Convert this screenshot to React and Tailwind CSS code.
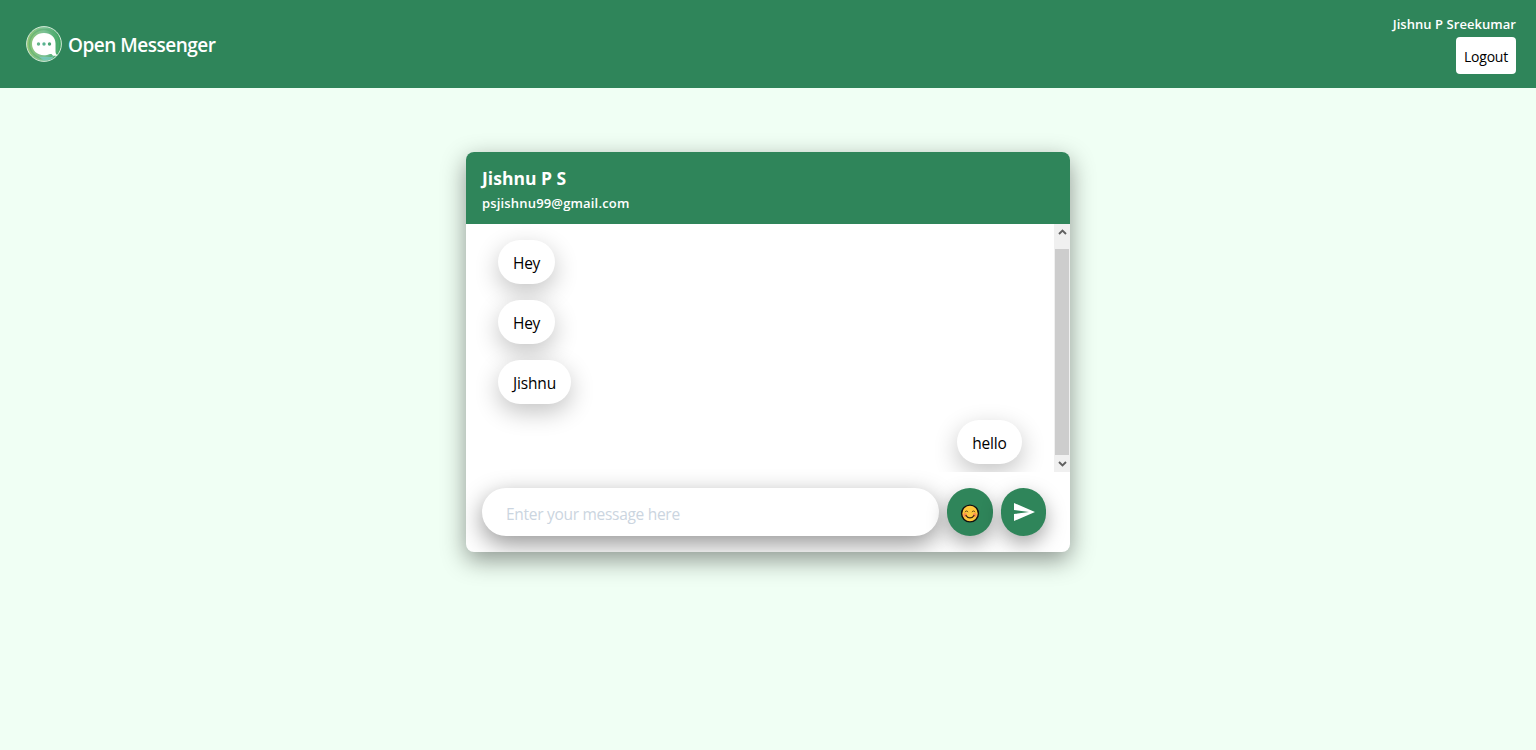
import React from "react";

const messages = [
  { id: 1, text: "Hey", mine: false, width: "w-[57px]", tracking: "tracking-[-0.3px]" },
  { id: 2, text: "Hey", mine: false, width: "w-[57px]", tracking: "tracking-[-0.3px]" },
  { id: 3, text: "Jishnu", mine: false, width: "w-[73px]", tracking: "tracking-[-0.15px]" },
  { id: 4, text: "hello", mine: true, width: "w-[65px]", tracking: "tracking-[-0.15px]" },
];

function Logo() {
  return (
    <svg className="h-9 w-9" viewBox="0 0 36 36">
      <defs>
        <linearGradient id="logoFill" x1="0" y1="0" x2="1" y2="0">
          <stop offset="0" stopColor="#8fc56f" />
          <stop offset="0.5" stopColor="#7cc196" />
          <stop offset="1" stopColor="#38a35e" />
        </linearGradient>
      </defs>
      <circle cx="18" cy="18" r="17.4" fill="url(#logoFill)" stroke="#d4ead9" strokeWidth="1" />
      <circle cx="18" cy="18" r="14.5" fill="none" stroke="#58ad73" strokeWidth="1.5" opacity="0.6" />
      <path d="M13 31h12l3-1-3 3.500-7 1z" fill="#79cbc2" opacity="0.8" />
      <path d="M18 7C25 7 29.500 11.500 29.500 17.500V25.500c0 1.500.5 2.500 1.500 3.500v.8h-4L25.500 28H24c-2 .9-4 1.200-6 1.200C11 29.200 6 24.200 6 18S11 7 18 7z" fill="#fff" />
      <circle cx="12.500" cy="18" r="1.700" fill="#66b58c" />
      <circle cx="18" cy="18" r="1.700" fill="#59b391" />
      <circle cx="23.500" cy="18" r="1.700" fill="#4da675" />
    </svg>
  );
}

function Smile() {
  return (
    <svg className="h-5 w-5" viewBox="-0.5 0 20 20" fill="none">
      <circle cx="9.500" cy="9.500" r="8.400" fill="#ffc83d" stroke="#111" strokeWidth="1.400" />
      <circle cx="4.700" cy="11" r="1.900" fill="#ff8d50" />
      <circle cx="14.300" cy="11" r="1.900" fill="#ff8d50" />
      <path d="M4.500 8.200c.5-1.600 2.500-1.600 3 0M11.500 8.200c.5-1.600 2.500-1.600 3 0" stroke="#5c4215" strokeWidth="1" />
      <path d="M5.500 11.500c1.700 3.200 6.300 3.200 8 0" stroke="#3b2b12" strokeWidth="1.300" strokeLinecap="round" />
    </svg>
  );
}

function Chevron({ up }) {
  return (
    <svg className="mr-px h-[6px] w-[9px]" viewBox="0 0 9 6" fill="none">
      <path d={up ? "M1 5l3.500-3.500L8 5" : "M1 1l3.500 3.500L8 1"} stroke="#606060" strokeWidth="1.900" />
    </svg>
  );
}

function Header() {
  return (
    <header className="flex h-[88px] items-center justify-between bg-[#2f855a] pr-5 pl-[26px] text-white">
      <div className="flex items-center gap-1.5">
        <Logo />
        <h1 className="pt-0.5 text-[19px] leading-6 font-semibold tracking-[-0.5px] whitespace-nowrap">Open Messenger</h1>
      </div>
      <div className="flex flex-col items-end gap-[3px]">
        <span className="text-[13px] leading-5 font-semibold tracking-[0.05px] whitespace-nowrap">Jishnu P Sreekumar</span>
        <button className="h-[37px] w-[60px] rounded bg-white pt-0.5 text-[14px] tracking-[-0.2px] text-black">Logout</button>
      </div>
    </header>
  );
}

function Bubble({ message }) {
  return (
    <div
      className={`flex h-11 shrink-0 items-center justify-center rounded-[22px] bg-white pt-1 text-[15.5px] whitespace-nowrap text-black shadow-[0_8px_24px_rgba(0,0,0,0.24)] ${message.width} ${message.tracking} ${message.mine ? "self-end" : "self-start"}`}
    >
      {message.text}
    </div>
  );
}

function Chat() {
  return (
    <section className="flex h-[400px] w-[604px] flex-col overflow-hidden rounded-lg bg-white shadow-[0_8px_24px_rgba(0,0,0,0.42)]">
      <div className="h-[72px] shrink-0 bg-[#2f855a] px-4 pt-3.5 text-white">
        <h2 className="text-[17.5px] leading-6 font-bold tracking-[0.02px]">Jishnu P S</h2>
        <p className="pt-0.5 text-[13px] leading-[22px] font-semibold tracking-[0.17px]">psjishnu99@gmail.com</p>
      </div>
      <div className="flex h-[248px] shrink-0">
        <div className="flex flex-1 flex-col gap-4 overflow-hidden pt-4 pr-8 pl-8">
          {messages.map((message) => (
            <Bubble key={message.id} message={message} />
          ))}
        </div>
        <div className="flex w-4 flex-col bg-[#f0f0f0] pl-px">
          <div className="flex h-[25px] justify-center pt-[5px]"><Chevron up /></div>
          <div className="h-[206px] w-[14px] bg-[#cdcdcd]" />
          <div className="flex h-[17px] justify-center pt-[6px]"><Chevron /></div>
        </div>
      </div>
      <div className="flex gap-2 pt-4 pl-4">
        <input
          aria-label="Message"
          className="h-12 w-[457px] rounded-full bg-white px-6 pt-[3px] text-[15.5px] tracking-[-0.29px] shadow-[0_8px_24px_rgba(0,0,0,0.42)] placeholder:text-[#cbd5e0]"
          placeholder="Enter your message here"
        />
        <button aria-label="Emoji" className="flex h-12 w-[46px] items-center justify-center rounded-full bg-[#2f855a] pt-[3px] shadow-[0_8px_20px_rgba(0,0,0,0.35)]">
          <Smile />
        </button>
        <button aria-label="Send" className="flex h-12 w-[45px] items-center justify-center rounded-full bg-[#2f855a] shadow-[0_8px_20px_rgba(0,0,0,0.35)]">
          <svg className="h-6 w-6" viewBox="0 0 24 24" fill="#fff">
            <path d="M2.010 21L23 12 2.010 3 2 10l15 2-15 2z" />
          </svg>
        </button>
      </div>
    </section>
  );
}

export default function App() {
  return (
    <div className="min-h-screen bg-[#f0fff4] font-['Segoe_UI','Open_Sans','Noto_Sans',sans-serif]">
      <Header />
      <main className="flex justify-center pt-16">
        <Chat />
      </main>
    </div>
  );
}
